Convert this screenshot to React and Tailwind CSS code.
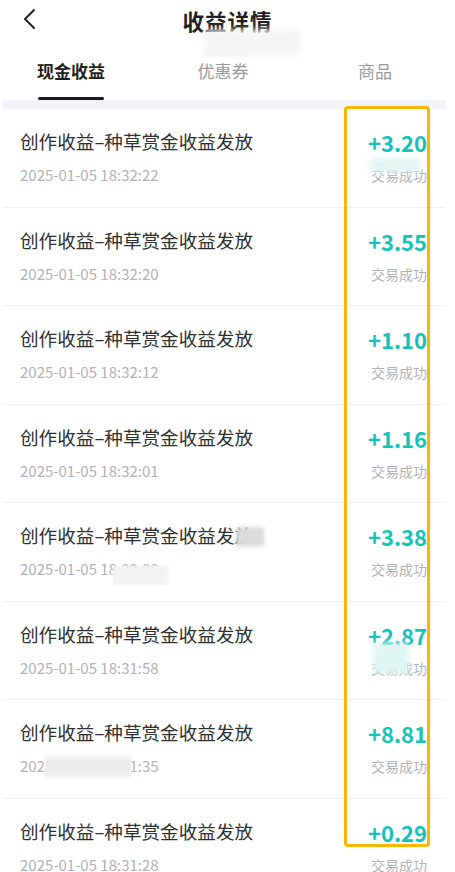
import React from "react";

const rows = [
  { amount: "+3.20", time: "2025-01-05 18:32:22" },
  { amount: "+3.55", time: "2025-01-05 18:32:20" },
  { amount: "+1.10", time: "2025-01-05 18:32:12" },
  { amount: "+1.16", time: "2025-01-05 18:32:01" },
  { amount: "+3.38", time: "2025-01-05 18:32:00" },
  { amount: "+2.87", time: "2025-01-05 18:31:58" },
  { amount: "+8.81", time: "2025-01-05 18:31:35" },
  { amount: "+0.29", time: "2025-01-05 18:31:28" },
];

const tabs = ["现金收益", "优惠券", "商品"];

// one income record
const Row = ({ amount, time }) => (
  <div className="flex h-[98.5px] items-start justify-between border-b border-[#f0f0f2] pl-[17px] pr-[19px] pt-[20px]">
    <div className="flex flex-col gap-[12px]">
      <p className="text-[18.6px] leading-[24px] text-[#2f2f2f]">创作收益–种草赏金收益发放</p>
      <p className="text-[15px] leading-[20px] text-[#b1b1b6]">{time}</p>
    </div>
    <div className="flex flex-col items-end gap-[10px]">
      <p className="text-[22px] font-bold leading-[26px] text-[#13c2b9]">{amount}</p>
      <p className="text-[14px] leading-[20px] text-[#b1b1b6]">交易成功</p>
    </div>
  </div>
);

const App = () => {
  return (
    <div
      className="relative min-h-[872px] w-[455px] overflow-hidden bg-white"
      style={{ fontFamily: '"Noto Sans CJK SC", "Noto Sans", sans-serif' }}
    >
      {/* header */}
      <div className="relative flex h-[42px] items-center justify-center">
        <svg
          className="absolute left-[22px] top-[8px]"
          width="16"
          height="22"
          viewBox="0 0 16 22"
          fill="none"
          stroke="#222"
          strokeWidth="2"
          strokeLinecap="round"
          strokeLinejoin="round"
        >
          <path d="M12 2 L3 11 L12 20" />
        </svg>
        <h1 className="text-[21.5px] font-bold tracking-[1px] text-[#1f1f1f]">收益详情</h1>
      </div>

      {/* tabs */}
      <div className="-ml-[5px] grid w-[456px] grid-cols-3 pt-[14px]">
        {tabs.map((tab, i) => (
          <div key={tab} className="flex flex-col items-center">
            <span
              className={
                i === 0
                  ? "text-[17px] font-bold leading-[30px] text-[#1f1f1f]"
                  : "text-[17px] leading-[30px] text-[#9a9a9f]"
              }
            >
              {tab}
            </span>
            <div
              className={
                i === 0
                  ? "mt-[11px] h-[3px] w-[66px] rounded-full bg-[#1a1a1a]"
                  : "mt-[11px] h-[3px] w-[66px]"
              }
            />
          </div>
        ))}
      </div>

      {/* list */}
      <div className="mx-[3px] w-[443px]">
        <div className="h-[9px] bg-[#f2f3f6]" />
        {rows.map((row) => (
          <Row key={row.time + row.amount} {...row} />
        ))}
      </div>

      {/* highlight box */}
      <div className="pointer-events-none absolute left-[344px] top-[106px] h-[741px] w-[86px] rounded-[4px] border-[3px] border-[#f9b703]" />

      {/* blur patches from the screenshot */}
      <div className="absolute left-[205px] top-[30px] h-[24px] w-[95px] bg-[#f4f4f4] blur-[3px]" />
      <div className="absolute left-[205px] top-[50px] h-[6px] w-[45px] bg-[#f4f4f4] blur-[2px]" />
      <div className="absolute left-[236px] top-[527px] h-[20px] w-[28px] bg-[#dcdcdc] blur-[2px]" />
      <div className="absolute left-[113px] top-[566px] h-[19px] w-[55px] bg-[#f2f2f2] blur-[1px]" />
      <div className="absolute left-[373px] top-[643px] h-[30px] w-[36px] bg-[#dff5f3] blur-[3px]" />
      <div className="absolute left-[45px] top-[757px] h-[20px] w-[86px] bg-[#ebebeb] blur-[2px]" />
      <div className="absolute left-[370px] top-[158px] h-[14px] w-[50px] bg-[#e2f4f2] blur-[3px]" />
    </div>
  );
};

export default App;
